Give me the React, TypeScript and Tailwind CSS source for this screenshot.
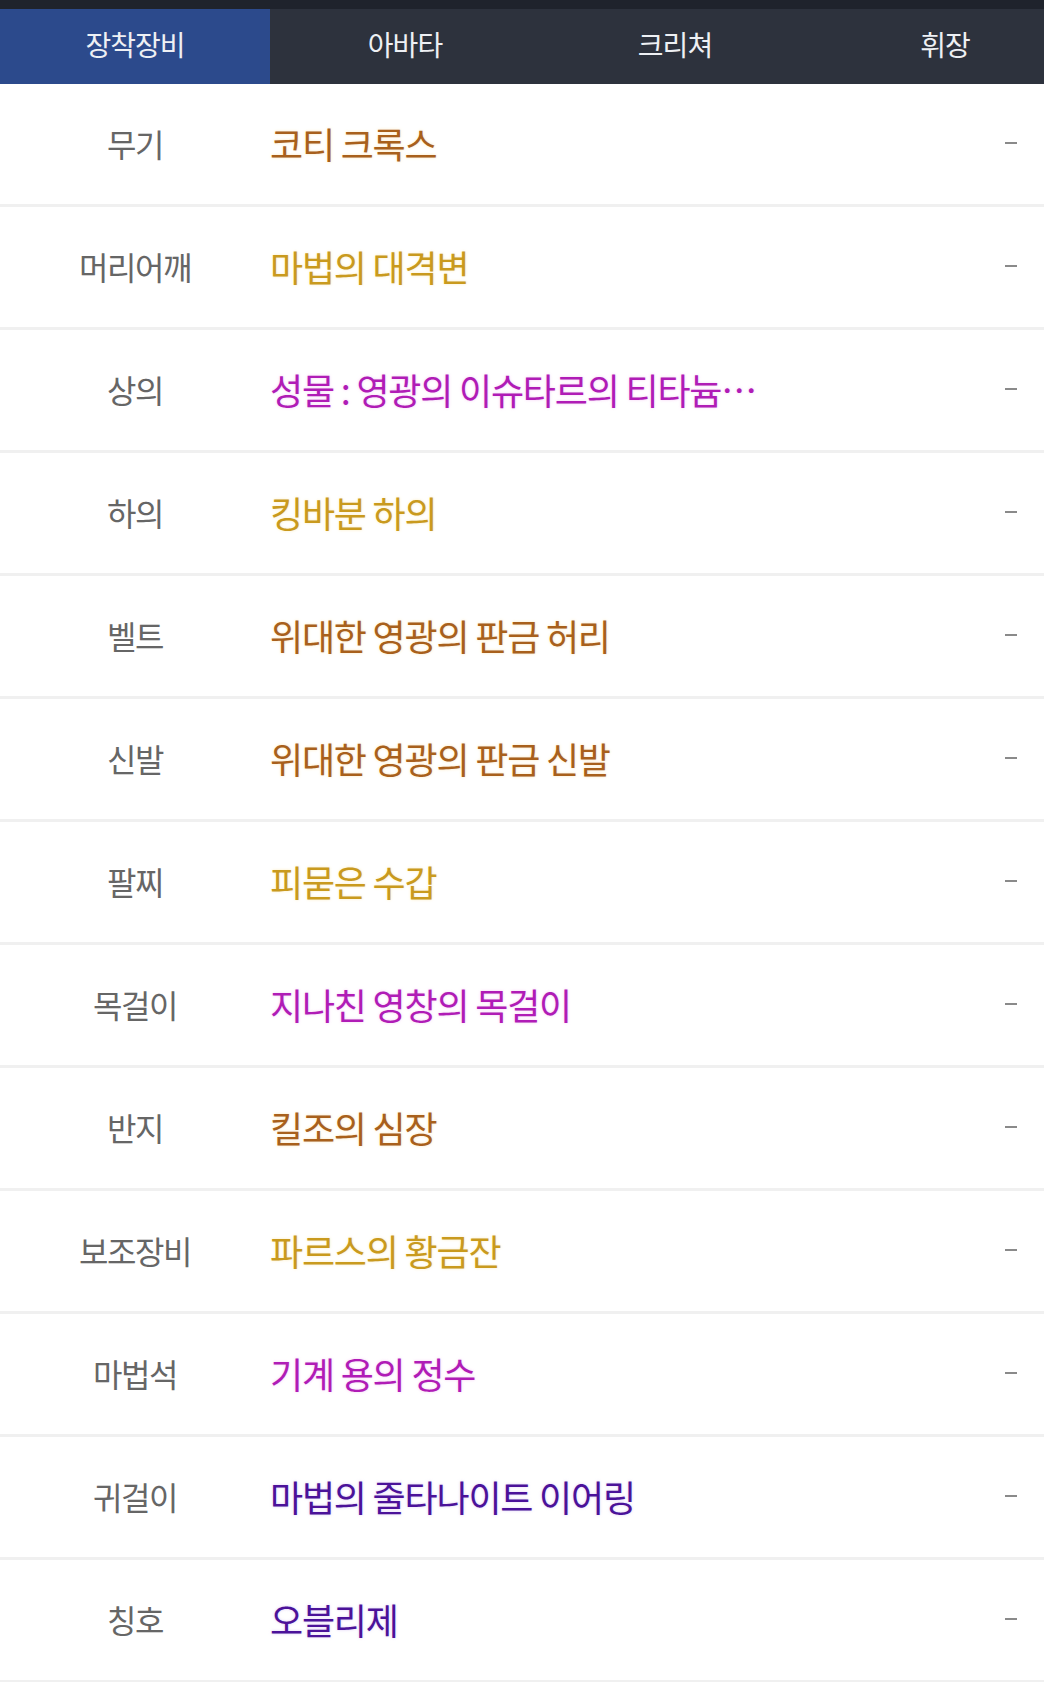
import React from "react";

interface Equip {
  slot: string;
  name: string;
  color: string;
}

const tabs = ["장착장비", "아바타", "크리쳐", "휘장"];

const BROWN = "text-[#a8601c] [text-shadow:0_0_3px_rgba(250,215,140,0.6)]";
const GOLD = "text-[#c99a1e] [text-shadow:0_0_3px_rgba(250,225,150,0.6)]";
const PINK = "text-[#b01cb6] [text-shadow:0_0_3px_rgba(240,170,240,0.6)]";
const PURPLE = "text-[#4b1299] [text-shadow:0_0_3px_rgba(200,170,240,0.6)]";

const items: Equip[] = [
  { slot: "무기", name: "코티 크록스", color: BROWN },
  { slot: "머리어깨", name: "마법의 대격변", color: GOLD },
  { slot: "상의", name: "성물 : 영광의 이슈타르의 티타늄…", color: PINK },
  { slot: "하의", name: "킹바분 하의", color: GOLD },
  { slot: "벨트", name: "위대한 영광의 판금 허리", color: BROWN },
  { slot: "신발", name: "위대한 영광의 판금 신발", color: BROWN },
  { slot: "팔찌", name: "피묻은 수갑", color: GOLD },
  { slot: "목걸이", name: "지나친 영창의 목걸이", color: PINK },
  { slot: "반지", name: "킬조의 심장", color: BROWN },
  { slot: "보조장비", name: "파르스의 황금잔", color: GOLD },
  { slot: "마법석", name: "기계 용의 정수", color: PINK },
  { slot: "귀걸이", name: "마법의 줄타나이트 이어링", color: PURPLE },
  { slot: "칭호", name: "오블리제", color: PURPLE },
];

export default function App() {
  return (
    <div className="w-[1044px] bg-white font-['Noto_Sans_CJK_KR','Noto_Sans',sans-serif] overflow-hidden">
      {/* decorative strip above the tabs */}
      <div className="h-[9px] bg-[#1f232c]" />

      <div className="flex h-[75px] bg-[#2d323d] overflow-hidden">
        {tabs.map((t, i) => (
          <div
            key={t}
            className={
              "w-[270px] shrink-0 flex items-center justify-center pb-[5px] text-[28px] tracking-[-1px] text-[#eef0f4] " +
              (i === 0 ? "bg-[#2c4a8c]" : "")
            }
          >
            {t}
          </div>
        ))}
      </div>

      <div>
        {items.map((it) => (
          <div key={it.slot} className="flex items-center h-[123px] pb-[2px] border-b-[3px] border-[#f0f0f0]">
            <div className="w-[270px] shrink-0 text-center text-[32px] tracking-[-1.5px] text-[#666666]">
              {it.slot}
            </div>
            <div className={"w-[500px] whitespace-nowrap text-[36px] tracking-[-1.2px] " + it.color}>{it.name}</div>
            <div className="flex-1 flex justify-end pr-[27px]">
              <span className="block w-[12px] h-[2px] bg-[#8a8a8a]" />
            </div>
          </div>
        ))}
      </div>
    </div>
  );
}
